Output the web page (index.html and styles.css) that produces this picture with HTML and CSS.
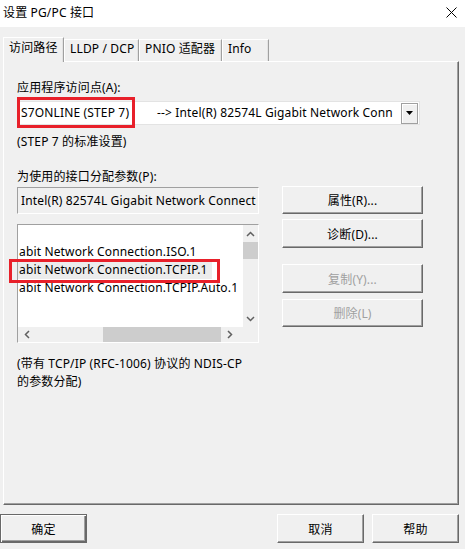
FILE: index.html
```html
<!DOCTYPE html>
<html lang="zh-CN">
  <head>
    <meta charset="UTF-8" />
    <title>设置 PG/PC 接口</title>
    <link rel="stylesheet" href="styles.css">
  </head>
  <body>
    <div class="window">
      <div class="titlebar">
        <span class="title">设置 PG/PC 接口</span>
        <svg class="close" width="11" height="11" viewBox="0 0 11 11">
          <path d="M0.5 0.5 L10.5 10.5 M10.5 0.5 L0.5 10.5" stroke="#000" stroke-width="1" fill="none" />
        </svg>
      </div>

      <div class="tabs">
        <div class="tab active t1">访问路径</div>
        <div class="tab t2">LLDP / DCP</div>
        <div class="tab t3">PNIO 适配器</div>
        <div class="tab t4">Info</div>
      </div>

      <div class="panel">
        <div class="label first">应用程序访问点(A):</div>
        <div class="combo">
          <div class="combo-text"><span class="ap">S7ONLINE (STEP 7)</span>--&gt; Intel(R) 82574L Gigabit Network Conn</div>
          <div class="combo-btn">
            <svg width="7" height="4" viewBox="0 0 7 4"><path d="M0 0 H7 L3.5 4 Z" fill="#000" /></svg>
          </div>
        </div>
        <div class="label hint">(STEP 7 的标准设置)</div>

        <div class="label params">为使用的接口分配参数(P):</div>
        <div class="row">
          <div class="left">
            <div class="readonly">Intel(R) 82574L Gigabit Network Connect</div>
            <div class="listbox">
              <div class="list-view">
                <div class="items">
                  <div class="item">&nbsp;</div>
                  <div class="item">abit Network Connection.ISO.1</div>
                  <div class="item selected">abit Network Connection.TCPIP.1</div>
                  <div class="item">abit Network Connection.TCPIP.Auto.1</div>
                </div>
                <div class="vscroll">
                  <svg width="9" height="6" viewBox="0 0 9 6"><path d="M1 5 L4.5 1.5 L8 5" stroke="#606060" stroke-width="1.5" fill="none" /></svg>
                  <div class="vthumb"></div>
                  <div class="spacer"></div>
                  <svg width="9" height="6" viewBox="0 0 9 6"><path d="M1 1 L4.5 4.5 L8 1" stroke="#606060" stroke-width="1.5" fill="none" /></svg>
                </div>
              </div>
              <div class="hscroll">
                <svg width="6" height="9" viewBox="0 0 6 9"><path d="M5 1 L1.5 4.5 L5 8" stroke="#606060" stroke-width="1.5" fill="none" /></svg>
                <div class="hthumb"></div>
                <svg width="6" height="9" viewBox="0 0 6 9"><path d="M1 1 L4.5 4.5 L1 8" stroke="#606060" stroke-width="1.5" fill="none" /></svg>
                <div class="corner"></div>
              </div>
            </div>
          </div>
          <div class="right">
            <div class="btn b-props">属性(R)...</div>
            <div class="btn b-diag">诊断(D)...</div>
            <div class="btn disabled b-copy">复制(Y)...</div>
            <div class="btn disabled b-del">删除(L)</div>
          </div>
        </div>

        <div class="note">(带有 TCP/IP (RFC-1006) 协议的 NDIS-CP<br />的参数分配)</div>

        <!-- 红色标注框 -->
        <div class="mark mark-ap"></div>
        <div class="mark mark-item"></div>
      </div>

      <div class="footer">
        <div class="btn default">确定</div>
        <div class="spacer"></div>
        <div class="btn">取消</div>
        <div class="btn">帮助</div>
      </div>
    </div>
  </body>
</html>
```

FILE: styles.css
```css
* {
  box-sizing: border-box;
  margin: 0;
  padding: 0;
}
body {
  width: 465px;
  height: 549px;
  background-color: #f0f0f0;
  font-family: "Noto Sans", "Noto Sans CJK SC", sans-serif;
  font-size: 12px;
  letter-spacing: 0.15px;
  color: #000;
  overflow: hidden;
}
.window {
  width: 465px;
  height: 549px;
}

.titlebar {
  height: 27px;
  background-color: #fff;
  display: flex;
  justify-content: space-between;
  align-items: center;
  padding: 0 8px 2px 3px;
}
.title {
  line-height: 16px;
}

.tabs {
  display: flex;
  align-items: flex-end;
  height: 24px;
  margin: 10px 0 0 3px;
}
.tab {
  height: 22px;
  line-height: 18px;
  padding-left: 5px;
  border-top: 1px solid #fff;
  border-left: 1px solid #fff;
  border-right: 1px solid #a0a0a0;
  box-shadow: inset -1px 0 0 #e3e3e3;
  white-space: nowrap;
}
.tab.active {
  height: 25px;
  line-height: 20px;
  margin-bottom: -1px;
  background-color: #f0f0f0;
  position: relative;
  z-index: 1;
}
.t1 { width: 61px; }
.t2 { width: 75px; }
.t3 { width: 83px; }
.t4 { width: 47px; }

.panel {
  position: relative;
  margin-left: 3px;
  width: 456px;
  height: 444px;
  border-top: 1px solid #fff;
  border-left: 1px solid #fff;
  border-right: 1px solid #696969;
  border-bottom: 1px solid #696969;
  box-shadow: inset -1px -1px 0 #a0a0a0;
  padding-left: 13px;
}

.label {
  line-height: 16px;
  white-space: nowrap;
}
.label.first {
  margin-top: 18px;
}
.label.hint {
  margin-top: 9px;
}
.label.params {
  margin-top: 19px;
}

.combo {
  margin-top: 5px;
  width: 403px;
  height: 24px;
  background-color: #fff;
  border: 1px solid #e3e3e3;
  display: flex;
  align-items: center;
}
.combo-text {
  flex: 1;
  overflow: hidden;
  white-space: nowrap;
  padding-left: 3px;
  line-height: 20px;
}
.ap {
  display: inline-block;
  width: 136px;
}
.combo-btn {
  width: 17px;
  height: 21px;
  border: 1px solid #a0a0a0;
  background-color: #f0f0f0;
  box-shadow: inset 1px 1px 0 #fff;
  display: flex;
  justify-content: center;
  align-items: center;
  margin-right: 1px;
}

.row {
  display: flex;
  gap: 23px;
  margin-top: 1px;
}
.left {
  width: 242px;
}
.readonly {
  margin-top: 1px;
  height: 27px;
  border-top: 1px solid #a0a0a0;
  border-left: 1px solid #a0a0a0;
  border-right: 1px solid #fff;
  border-bottom: 1px solid #fff;
  background-color: #f0f0f0;
  line-height: 25px;
  padding-left: 3px;
  white-space: nowrap;
  overflow: hidden;
}

.listbox {
  margin-top: 10px;
  height: 119px;
  border-top: 1px solid #a0a0a0;
  border-left: 1px solid #a0a0a0;
  border-right: 1px solid #fff;
  border-bottom: 1px solid #fff;
  background-color: #fff;
  display: flex;
  flex-direction: column;
}
.list-view {
  display: flex;
  flex: 1;
  overflow: hidden;
}
.items {
  flex: 1;
  overflow: hidden;
}
.item {
  line-height: 18px;
  padding-left: 1px;
  white-space: nowrap;
}
.item.selected {
  background-color: #ececec;
  width: 194px;
}
.vscroll {
  width: 15px;
  background-color: #f0f0f0;
  display: flex;
  flex-direction: column;
  align-items: center;
  padding: 6px 0 5px;
}
.vthumb {
  width: 15px;
  height: 17px;
  margin-top: 5px;
  background-color: #cdcdcd;
}
.vscroll .spacer {
  flex: 1;
}
.hscroll {
  height: 15px;
  background-color: #f0f0f0;
  display: flex;
  align-items: center;
  padding-left: 6px;
}
.hthumb {
  width: 118px;
  height: 15px;
  margin-left: 73px;
  margin-right: 6px;
  background-color: #cdcdcd;
}
.corner {
  width: 15px;
  height: 15px;
  margin-left: auto;
  background-color: #f0f0f0;
}

.right {
  width: 141px;
  display: flex;
  flex-direction: column;
}
.btn {
  height: 28px;
  border-top: 1px solid #fff;
  border-left: 1px solid #fff;
  border-right: 1px solid #696969;
  border-bottom: 1px solid #696969;
  box-shadow: inset -1px -1px 0 #a0a0a0;
  background-color: #f0f0f0;
  display: flex;
  justify-content: center;
  align-items: center;
  white-space: nowrap;
}
.btn.disabled {
  color: #a0a0a0;
}
.b-diag { margin-top: 5px; height: 29px; }
.b-copy { margin-top: 16px; height: 29px; }
.b-del { margin-top: 6px; }

.note {
  margin-top: 12px;
  line-height: 18px;
}

.mark {
  position: absolute;
  border: 3px solid #e8202a;
}
.mark-ap {
  left: 13px;
  top: 35px;
  width: 118px;
  height: 31px;
}
.mark-item {
  left: 5px;
  top: 197px;
  width: 211px;
  height: 24px;
}

.footer {
  display: flex;
  gap: 8px;
  margin-top: 9px;
  width: 459px;
}
.footer .btn {
  width: 87px;
  height: 29px;
}
.footer .spacer {
  flex: 1;
}
.btn.default {
  border: 1px solid #696969;
  box-shadow: inset 1px 1px 0 #fff, inset -1px -1px 0 #696969, inset -2px -2px 0 #a0a0a0;
}
```
